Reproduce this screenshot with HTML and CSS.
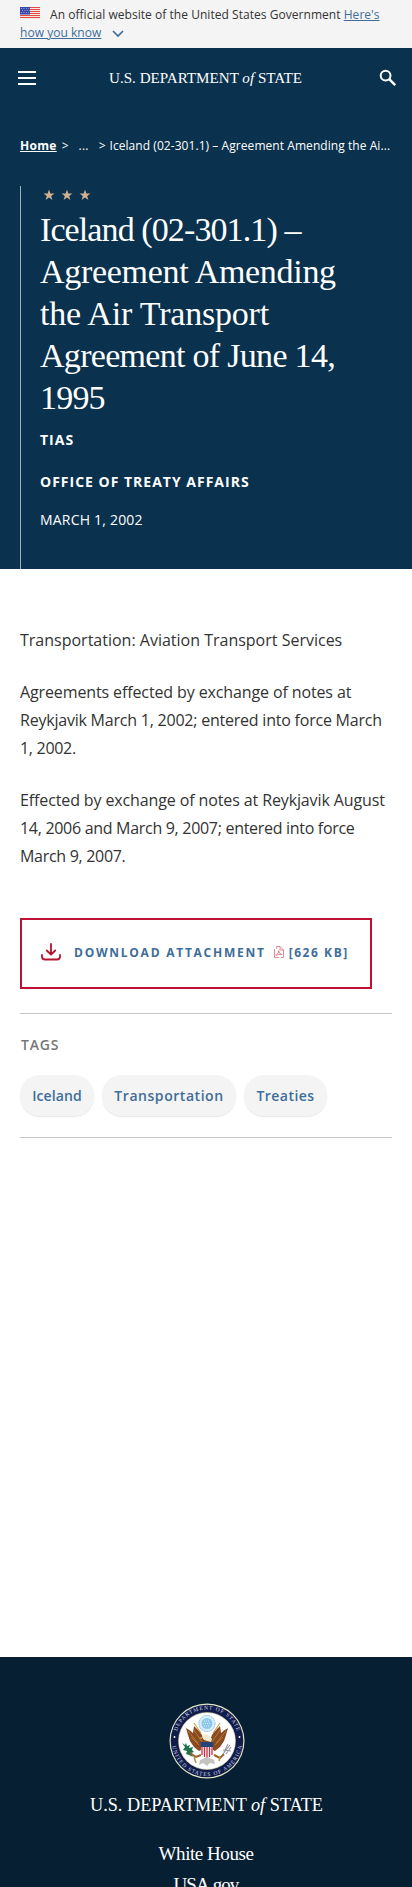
FILE: index.html
```html
<!DOCTYPE html>
<html lang="en">
<head>
<meta charset="utf-8">
<title>Iceland (02-301.1) – Agreement Amending the Air Transport Agreement of June 14, 1995</title>
<link rel="stylesheet" href="styles.css">
</head>
<body>
<div class="gov-banner">
  <svg class="flag" width="20" height="12" viewBox="0 0 20 12"><rect width="20" height="12" fill="#f7e6e4"/><path d="M0 .5h20M0 2.5h20M0 4.5h20M0 6.5h20M0 8.5h20M0 10.5h20" stroke="#df4a43" stroke-width="1.1"/><rect width="10" height="7.5" fill="#3948a5"/><path d="M1 1.5h9M2 3.5h8M1 5.5h9" stroke="#aeb7ec" stroke-width=".8" stroke-dasharray="1 1.4"/></svg><span class="official">An official website of the United States Government</span> <a href="#">Here's<br>how you know</a><svg class="chevron" width="12" height="8" viewBox="0 0 12 8"><path d="M1 1l5 5 5-5" fill="none" stroke="#3a6a98" stroke-width="1.6"/></svg>
</div>
<header class="site-header">
  <svg width="18" height="16" viewBox="0 0 18 16"><path d="M0 2h18M0 8h18M0 14h18" stroke="#fff" stroke-width="2"/></svg>
  <svg class="wordmark" width="194" height="24" viewBox="0 0 194 24"><text x="0" y="17" font-size="15.5" textLength="193" lengthAdjust="spacingAndGlyphs">U.S. DEPARTMENT <tspan font-style="italic">of</tspan> STATE</text></svg>
  <svg width="18" height="18" viewBox="0 0 18 18" fill="none" stroke="#fff"><circle cx="6.6" cy="6.6" r="4.9" stroke-width="2"/><path d="M10.2 10.2l6 6" stroke-width="2.5"/></svg>
</header>
<section class="hero">
  <nav class="crumbs"><a href="#">Home</a><span class="sep">&gt;</span><span class="dots">...</span><span class="sep2">&gt;</span><span class="current">Iceland (02-301.1) – Agreement Amending the Ai...</span></nav>
  <div class="headline">
    <svg class="stars" width="50" height="12" viewBox="0 0 50 12" fill="#d1b08f"><defs><path id="star" d="M6 .5l1.35 3.9 4.15.05-3.3 2.5 1.2 4L6 8.6l-3.4 2.35 1.2-4L.5 4.45l4.15-.05z"/></defs><use href="#star"/><use href="#star" x="18"/><use href="#star" x="36"/></svg>
    <h1><span class="l1">Iceland (02-301.1) –</span> <span class="l2">Agreement Amending</span> <span class="l3">the Air Transport</span> <span class="l4">Agreement of June 14,</span> <span class="l5">1995</span></h1>
    <p class="kind">TIAS</p>
    <p class="office">OFFICE OF TREATY AFFAIRS</p>
    <p class="date">MARCH 1, 2002</p>
  </div>
</section>
<main>
  <article>
    <p class="wide">Transportation: Aviation Transport Services</p>
    <p><span class="medium">Agreements effected by exchange of notes at</span><br><span class="close">Reykjavik March 1, 2002; entered into force March</span><br>1, 2002.</p>
    <p><span class="medium">Effected by exchange of notes at Reykjavik August</span><br>14, 2006 and March 9, 2007; entered into force<br>March 9, 2007.</p>
  </article>
  <a class="download" href="#">
    <svg width="20" height="18" viewBox="0 0 20 18" fill="none" stroke="#b5122f" stroke-width="1.8" stroke-linecap="round" stroke-linejoin="round"><path d="M10 1v10M5.8 7.5L10 11.700l4.200-4.200M1 12v1.500q0 3 3 3h12q3 0 3-3V12"/></svg>
    <span class="label">DOWNLOAD ATTACHMENT</span>
    <svg class="pdf" width="10" height="12" viewBox="0 0 10 12" fill="none" stroke="#d4717c" stroke-width=".8"><path d="M2.500 3V.5H6L9.500 4v7.500H7M6 .5V4h3.500M.5 3v8.500H5M2 9.500Q5 7 4.700 4.500 4.500 7.500 8 8.500 5 7.500 2 9.500z"/></svg>
    <span class="size">[626 KB]</span>
  </a>
  <section class="tags">
    <h2>TAGS</h2>
    <div class="pills"><a class="p1" href="#">Iceland</a><a class="p2" href="#">Transportation</a><a class="p3" href="#">Treaties</a></div>
  </section>
</main>
<footer>
  <svg class="seal" width="76" height="76" viewBox="0 0 76 76">
    <defs><path id="top-arc" d="M6.500 38a31.500 31.500 0 0 1 63 0"/><path id="bottom-arc" d="M3 38a35 35 0 0 0 70 0"/></defs>
    <circle cx="38" cy="38" r="37.500" fill="#e4e8c5"/><circle cx="38" cy="38" r="36.300" fill="#101c4c"/><circle cx="38" cy="38" r="28.500" fill="#fff" stroke="#c9c79a" stroke-width=".6"/>
    <text class="ring"><textPath href="#top-arc" startOffset="50%" text-anchor="middle" textLength="79">DEPARTMENT OF STATE</textPath></text>
    <text class="ring"><textPath href="#bottom-arc" startOffset="50%" text-anchor="middle" textLength="100">UNITED STATES OF AMERICA</textPath></text>
    <circle cx="5.500" cy="34" r=".9" fill="#fff"/><circle cx="70.500" cy="34" r=".9" fill="#fff"/>
    <circle cx="38" cy="20.500" r="8.600" fill="#d9effb"/><circle cx="38" cy="20.500" r="8" fill="none" stroke="#8ac4e8" stroke-width="1" stroke-dasharray="1.500 .8"/><circle cx="38" cy="20.500" r="5.500" fill="#8dc8ec"/><path d="M35 18h6M34 20.500h8M35 23h6" stroke="#d9effb" stroke-width="1" stroke-dasharray="1 1"/>
    <path d="M17 25l4 2.500 3 2.500 1-7 5 5 3 4 1.500 4h7L43 32l3-4 5-5 1 7 3-2.500 4-2.500-2 7-2 6-4 6-5 4-4-2H34l-4 2-5-4-4-6-2-6z" fill="#8a4a20"/>
    <path d="M19 28l10 12M22 34l8 8M25 27l8 12M57 28L47 40M54 34l-8 8M51 27l-8 12" stroke="#bd8144" stroke-width=".8"/>
    <path d="M35 37l-2-3 3-3 4 1 3 4-1 3z" fill="#f4ead0"/><path d="M33 34l-3 1 3 1z" fill="#d9a62d"/>
    <path d="M25 20l7 10M51 20l-7 10" stroke="#d3a44d" stroke-width="1.200"/>
    <path d="M32 40h12v10q0 4-6 5.500Q32 54 32 50z" fill="#fff"/><path d="M33 43v9M35.500 43v11M38 43v12M40.500 43v11M43 43v9" stroke="#c92a40" stroke-width="1.300"/><path d="M31.800 39h12.400v5H31.800z" fill="#24437c"/>
    <path d="M31 57l7-3 7 3 1 4-5-1-3 3-4-3-4 2z" fill="#c3c4c0"/>
    <path d="M13 40l3 2 1-2 1 3 3-1-1 3 4-1-1 3 2 2-3 1 2 4-4-2-3-1 1-3-4-1 2-3z" fill="#1f7349"/><path d="M21 50l6 4 5-2M45 52l6 3 4-4" fill="none" stroke="#9a6327" stroke-width="2"/><path d="M25 54l2 6M51 54l-1 4" stroke="#bd9149" stroke-width="1.500"/>
    <path d="M54 51l7-9M55 49l4-8M57 51l5-7M54 47l8 1" stroke="#999ca5" stroke-width="1.200"/>
  </svg>
  <svg class="wordmark" width="234" height="28" viewBox="0 0 234 28"><text x="0" y="20" font-size="18.800" textLength="233" lengthAdjust="spacingAndGlyphs">U.S. DEPARTMENT <tspan font-style="italic">of</tspan> STATE</text></svg>
  <nav class="footer-links"><a href="#">White House</a><a class="usa" href="#">USA.gov</a></nav>
</footer>
</body>
</html>
```
FILE: styles.css
```css
* { box-sizing: border-box; }
html { overflow: hidden; }
body { margin: 0; height: 1887px; overflow: hidden; display: flex; flex-direction: column; background: #fff; font-family: "Open Sans", sans-serif; color: #333; }
h1, h2, p { margin: 0; font-weight: 400; }
a { color: #3e6d99; }

.gov-banner { flex: none; height: 48px; padding: 6px 20px; background: #f4f4f4; font-size: 12px; line-height: 18px; letter-spacing: .04px; white-space: nowrap; }
.flag { margin-right: 10px; vertical-align: 0; }
.chevron { margin-left: 11px; vertical-align: -1px; }

.site-header { flex: none; height: 60px; padding: 0 15px 0 18px; display: flex; align-items: center; justify-content: space-between; background: #0a314d; }
.wordmark { display: block; fill: #fff; font-family: "Liberation Serif", serif; }
.site-header .wordmark { margin-right: 4px; }

.hero { flex: none; height: 461px; padding: 29px 20px 0; background: #0a314d; color: #fff; }
.crumbs { display: flex; height: 18px; font-size: 12px; line-height: 18px; white-space: nowrap; }
.crumbs a { color: #fff; font-weight: 700; letter-spacing: .3px; }
.sep { margin-left: 5px; }
.dots { margin-left: 10px; letter-spacing: .2px; }
.sep2 { margin-left: 10px; margin-right: 4px; }
.current { letter-spacing: .06px; }

.headline { margin-top: 31px; height: 383px; padding-left: 19px; border-left: 1px solid #9cb0b9; }
.stars { display: block; margin: 3px 0 0 3px; }
.headline h1 { margin-top: 8px; font: 34px/42px "Liberation Serif", serif; }
.headline { display: flex; flex-direction: column; }
.headline h1 span { display: block; white-space: nowrap; }
.l1 { letter-spacing: -.9px; }
.l2 { letter-spacing: -.3px; }
.l3 { letter-spacing: -.2px; }
.l4 { letter-spacing: -.7px; }
.l5 { letter-spacing: -.8px; }
.headline p { font-size: 14px; line-height: 20px; }
.headline .kind { margin-top: 11px; }
.headline .kind, .headline .office { font-weight: 700; letter-spacing: 1px; }
.office { margin-top: 22px; }
.date { margin-top: 18px; letter-spacing: .2px; }

main { flex: 1; padding: 57px 20px 0; }
article { display: flex; flex-direction: column; gap: 24px; font-size: 16px; line-height: 28px; letter-spacing: -.3px; white-space: nowrap; }
.wide { letter-spacing: 0; }
.medium { letter-spacing: -.12px; }
.close { letter-spacing: -.22px; }
.download { margin-top: 48px; width: 352px; height: 71px; padding: 0 0 4px 19px; display: flex; align-items: center; border: 2px solid #bd1236; font-size: 12px; font-weight: 700; text-decoration: none; white-space: nowrap; }
.label { margin-left: 13px; letter-spacing: 1.750px; }
.label, .size { position: relative; top: 1px; }
.pdf { margin-left: 8px; }
.size { margin-left: 5px; letter-spacing: 1.550px; }
.tags { margin-top: 24px; height: 125px; padding-top: 21px; border: solid #c6c6c6; border-width: 1px 0; }
.tags h2 { padding-left: 1px; color: #777; font-size: 14px; font-weight: 600; line-height: 20px; letter-spacing: .8px; }
.pills { margin-top: 20px; display: flex; gap: 8px; }
.pills a { height: 41px; display: grid; place-content: center; border-radius: 20px; background: #f4f4f4; box-shadow: 0 1px 1px #e8e8e8; font-size: 14px; font-weight: 600; text-decoration: none; }
.pills .p1 { width: 74px; letter-spacing: .1px; }
.pills .p2 { width: 134px; letter-spacing: .55px; }
.pills .p3 { width: 83px; letter-spacing: .45px; }

footer { flex: none; height: 230px; padding-top: 46px; display: flex; flex-direction: column; align-items: center; background: #071f33; overflow: hidden; }
.ring { fill: #d5daea; font: 5.500px "Liberation Serif", serif; }
.seal { flex: none; margin-left: 2px; }
footer .wordmark { flex: none; margin: 12px 0 0 1px; }
.footer-links { display: flex; flex-direction: column; align-items: center; margin-top: 19px; font: 19px/31px "Liberation Serif", serif; }
.footer-links a { color: #fff; text-decoration: none; letter-spacing: -.45px; }
.footer-links .usa { letter-spacing: -.9px; }
```
